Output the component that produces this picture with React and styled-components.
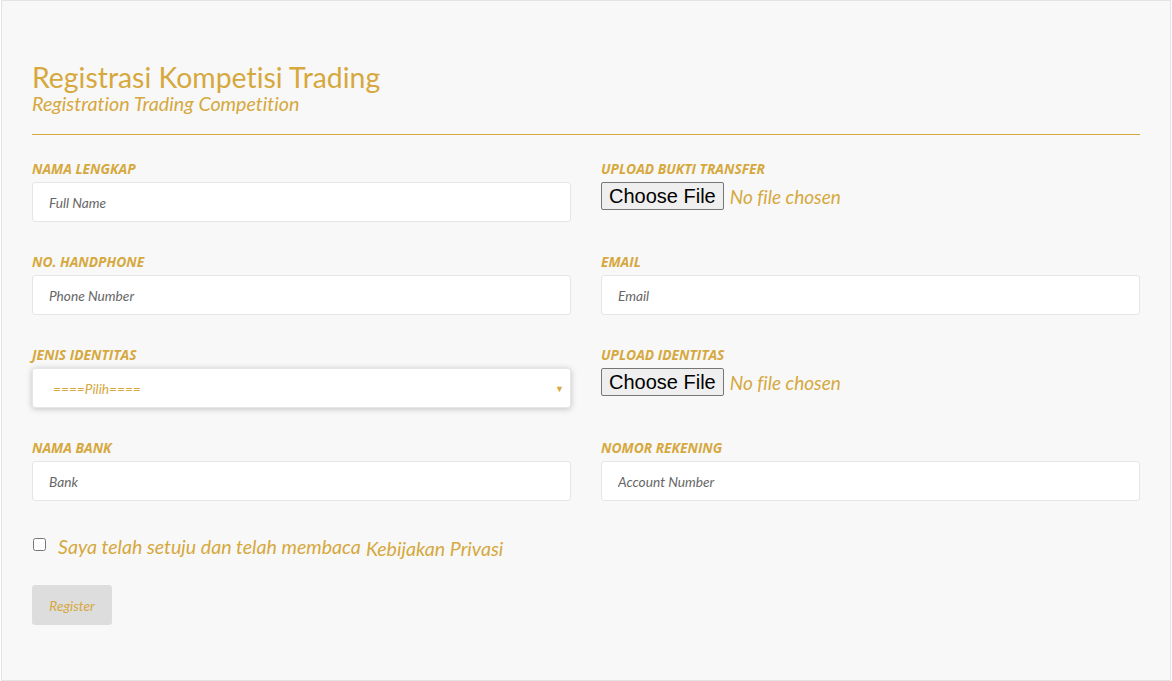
import React from 'react';
import styled, { createGlobalStyle } from 'styled-components';

const gold = '#d6a83e';

const GlobalStyle = createGlobalStyle`
  html, body {
    margin: 0;
    padding: 0;
    background: #ffffff;
  }
  * {
    box-sizing: border-box;
    font-variant-ligatures: none;
  }
`;

const Page = styled.div`
  margin-left: 1px;
  width: 1170px;
  height: 681px;
  background: #f8f8f8;
  border: 1px solid #e4e4e4;
  padding: 59px 30px 0 30px;
  font-family: Lato, "Open Sans", sans-serif;
`;

const Title = styled.h1`
  margin: 0;
  font-weight: 400;
  font-size: 28.4px;
  line-height: 34px;
  color: ${gold};
`;

const Subtitle = styled.div`
  font-style: italic;
  font-size: 19.7px;
  line-height: 19px;
  color: ${gold};
`;

const Rule = styled.hr`
  border: none;
  border-top: 1px solid ${gold};
  margin: 21px 0 25px 0;
`;

const Grid = styled.div`
  display: grid;
  grid-template-columns: 539px 539px;
  column-gap: 30px;
  row-gap: 31px;
`;

const Field = styled.div`
  display: flex;
  flex-direction: column;
`;

const Label = styled.label`
  font-family: "Open Sans", sans-serif;
  font-weight: 700;
  font-style: italic;
  font-size: 13.8px;
  line-height: 18px;
  text-transform: uppercase;
  color: ${gold};
  margin-bottom: 4px;
`;

const Input = styled.input`
  height: 40px;
  width: 100%;
  background: #ffffff;
  border: 1px solid #e6e6e6;
  border-radius: 3px;
  padding: 0 16px;
  font-family: Lato, sans-serif;
  font-style: italic;
  font-size: 13.7px;
  color: #555;
  outline: none;
  &::placeholder {
    color: #666;
  }
`;

const SelectWrap = styled.div`
  position: relative;
  height: 40px;
  background: #ffffff;
  border: 1px solid #e6e6e6;
  border-radius: 3px;
  box-shadow: 0 1px 6px rgba(0, 0, 0, 0.22);
`;

const Select = styled.select`
  appearance: none;
  width: 100%;
  height: 100%;
  border: none;
  background: transparent;
  padding: 0 20px;
  font-family: Lato, sans-serif;
  font-style: italic;
  font-size: 13.7px;
  color: ${gold};
  outline: none;
`;

const Caret = styled.span`
  position: absolute;
  right: 6px;
  top: 14px;
  font-size: 9px;
  color: ${gold};
  pointer-events: none;
`;

const FileRow = styled.div`
  display: flex;
  align-items: center;
  height: 28px;
`;

const FileButton = styled.button`
  font-family: "Liberation Sans", Arial, sans-serif;
  font-size: 20px;
  line-height: 22px;
  color: #000;
  background: #efefef;
  border: 1px solid #767676;
  border-radius: 2px;
  padding: 1px 7px;
  height: 28px;
`;

const FileStatus = styled.span`
  font-family: Lato, sans-serif;
  font-style: italic;
  font-size: 19px;
  color: ${gold};
  margin-left: 6px;
`;

const Agree = styled.div`
  display: flex;
  align-items: center;
  margin-top: 34px;
  font-style: italic;
  font-size: 19.6px;
  color: ${gold};
`;

const Check = styled.input`
  width: 13px;
  height: 13px;
  margin: 0 12px 0 1px;
  position: relative;
  top: -2px;
`;

const Link = styled.a`
  margin-left: 5px;
  color: ${gold};
  text-decoration: none;
  position: relative;
  top: 2px;
`;

const Register = styled.button`
  margin-top: 27px;
  width: 80px;
  height: 40px;
  background: #dddddd;
  border: none;
  border-radius: 3px;
  font-family: Lato, sans-serif;
  font-style: italic;
  font-size: 13.7px;
  color: ${gold};
`;

function FileField({ label }) {
  return (
    <Field>
      <Label>{label}</Label>
      <FileRow>
        <FileButton type="button">Choose File</FileButton>
        <FileStatus>No file chosen</FileStatus>
      </FileRow>
    </Field>
  );
}

function TextField({ label, placeholder }) {
  return (
    <Field>
      <Label>{label}</Label>
      <Input placeholder={placeholder} />
    </Field>
  );
}

export default function App() {
  return (
    <>
      <GlobalStyle />
      <Page>
        <Title>Registrasi Kompetisi Trading</Title>
        <Subtitle>Registration Trading Competition</Subtitle>
        <Rule />
        <Grid>
          <TextField label="Nama Lengkap" placeholder="Full Name" />
          <FileField label="Upload Bukti Transfer" />
          <TextField label="No. Handphone" placeholder="Phone Number" />
          <TextField label="Email" placeholder="Email" />
          <Field>
            <Label>Jenis Identitas</Label>
            <SelectWrap>
              <Select defaultValue="">
                <option value="">====Pilih====</option>
                <option value="ktp">KTP</option>
                <option value="sim">SIM</option>
                <option value="paspor">Paspor</option>
              </Select>
              <Caret>▼</Caret>
            </SelectWrap>
          </Field>
          <FileField label="Upload Identitas" />
          <TextField label="Nama Bank" placeholder="Bank" />
          <TextField label="Nomor Rekening" placeholder="Account Number" />
        </Grid>
        <Agree>
          <Check type="checkbox" />
          <span>Saya telah setuju dan telah membaca</span>
          <Link href="#">Kebijakan Privasi</Link>
        </Agree>
        <Register type="button">Register</Register>
      </Page>
    </>
  );
}
